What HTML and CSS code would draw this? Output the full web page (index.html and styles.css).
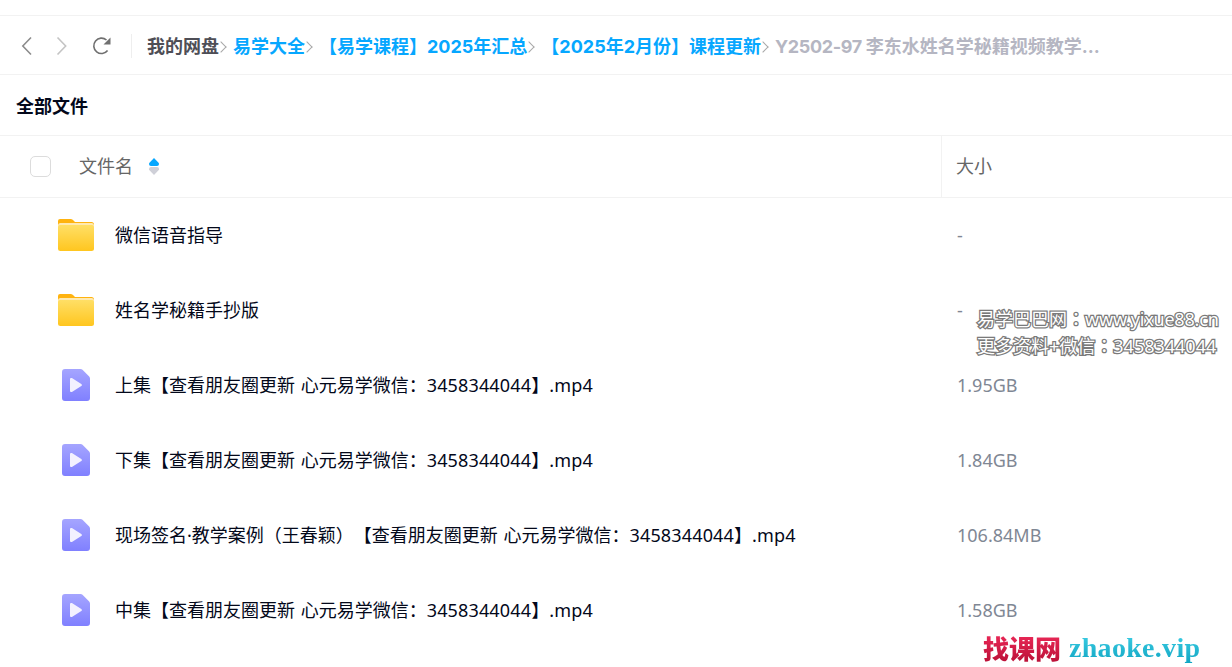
FILE: index.html
```html
<!DOCTYPE html>
<html lang="zh-CN">
<head>
<meta charset="utf-8">
<title>全部文件</title>
<link rel="stylesheet" href="styles.css">
</head>
<body>
<svg class="defs" width="0" height="0" aria-hidden="true">
  <defs>
    <linearGradient id="fg" x1="0" y1="0" x2="0" y2="1"><stop offset="0" stop-color="#ffdf66"/><stop offset="1" stop-color="#ffc61f"/></linearGradient>
    <linearGradient id="vg" x1="0" y1="0" x2="0" y2="1"><stop offset="0" stop-color="#a5a5ff"/><stop offset="1" stop-color="#8080ff"/></linearGradient>
    <symbol id="folder" viewBox="0 0 36 32">
      <path d="M2 0h10.500c1 0 1.800.4 2.500 1l2 2h16.500a2.500 2.500 0 0 1 2.500 2.500V12H0V2a2 2 0 0 1 2-2z" fill="#ffb30f"/>
      <path d="M0 6.500a2.500 2.500 0 0 1 2.500-2.500h31a2.500 2.500 0 0 1 2.500 2.500V12H0z" fill="#ffe9b0"/>
      <path d="M0 8a2 2 0 0 1 2-2h32a2 2 0 0 1 2 2v21.500a2.500 2.500 0 0 1-2.500 2.500h-31A2.500 2.500 0 0 1 0 29.500z" fill="url(#fg)"/>
    </symbol>
    <symbol id="video" viewBox="0 0 28 32">
      <path d="M3 0h15.500c.8 0 1.500.3 2 .8l6.700 6.700c.5.500.8 1.200.8 2V29a3 3 0 0 1-3 3H3a3 3 0 0 1-3-3V3a3 3 0 0 1 3-3z" fill="url(#vg)"/>
      <path d="M8 10.200c0-1 1-1.600 1.900-1.100l9.400 5.800c.8.500.8 1.700 0 2.200l-9.400 5.800c-.9.500-1.900-.1-1.900-1.100z" fill="#f3f1ff"/>
    </symbol>
  </defs>
</svg>
<div class="page">
  <nav class="nav">
    <div class="nav-btns">
      <svg class="ic" width="14" height="20" viewBox="0 0 14 20"><path d="M11 1.500 2.800 10l8.200 8.500" fill="none" stroke="#8c8c8c" stroke-width="1.600"/></svg>
      <svg class="ic" width="14" height="20" viewBox="0 0 14 20"><path d="m3.500 1.500 8.200 8.500-8.200 8.500" fill="none" stroke="#c4c4c4" stroke-width="1.600"/></svg>
      <svg class="ic" width="20" height="20" viewBox="0 0 20 20"><path d="M15.600 14.500A7.700 7.700 0 1 1 14.500 4" fill="none" stroke="#707070" stroke-width="1.600"/><path d="M18.500 1.500v7h-7z" fill="#707070"/></svg>
    </div>
    <div class="crumbs">
      <span class="crumb root">我的网盘</span><span class="sep"></span>
      <span class="crumb link">易学大全</span><span class="sep"></span>
      <span class="crumb link">【易学课程】2025年汇总</span><span class="sep"></span>
      <span class="crumb link">【2025年2月份】课程更新</span><span class="sep"></span>
      <span class="crumb last"><span class="code">Y2502-97 </span>李东水姓名学秘籍视频教学...</span>
    </div>
  </nav>
  <h1 class="title">全部文件</h1>
  <div class="thead">
    <div class="th-name">
      <span class="check"></span>
      <span class="th-label">文件名</span>
      <span class="sort"><i class="up"></i><i class="down"></i></span>
    </div>
    <div class="th-size">大小</div>
  </div>
  <ul class="rows">
    <li class="row"><svg class="folder"><use href="#folder"/></svg><span class="name">微信语音指导</span><span class="size">-</span></li>
    <li class="row"><svg class="folder"><use href="#folder"/></svg><span class="name">姓名学秘籍手抄版</span><span class="size">-</span></li>
    <li class="row"><svg class="video"><use href="#video"/></svg><span class="name">上集【查看朋友圈更新 心元易学微信：<span class="num">3458344044】.mp4</span></span><span class="size">1.95GB</span></li>
    <li class="row"><svg class="video"><use href="#video"/></svg><span class="name">下集【查看朋友圈更新 心元易学微信：<span class="num">3458344044】.mp4</span></span><span class="size">1.84GB</span></li>
    <li class="row"><svg class="video"><use href="#video"/></svg><span class="name">现场签名·教学案例（王春颖）【查看朋友圈更新 心元易学微信：<span class="num">3458344044】.mp4</span></span><span class="size">106.84MB</span></li>
    <li class="row"><svg class="video"><use href="#video"/></svg><span class="name">中集【查看朋友圈更新 心元易学微信：<span class="num">3458344044】.mp4</span></span><span class="size">1.58GB</span></li>
  </ul>
</div>
<div class="mark-site">易学巴巴网<span class="colon" lang="zh-TW">：</span><span class="url">www.yixue88.cn</span><br>更多资料+微信<span class="colon" lang="zh-TW">：</span>3458344044</div>
<div class="mark-logo"><span class="cn">找课网</span><span class="en">zhaoke.vip</span></div>
</body>
</html>
```
FILE: styles.css
```css
* { box-sizing: border-box; }
html, body { margin: 0; height: 100%; overflow: hidden; background: #fff; }
body { font-family: "Noto Sans", "Noto Sans CJK SC", sans-serif; color: #03081a; position: relative; text-spacing-trim: space-all; }
.defs { position: absolute; }
.page { padding-top: 15px; }
.nav { height: 60px; display: flex; align-items: center; border-top: 1px solid #f2f2f2; border-bottom: 1px solid #f2f2f2; padding-left: 20px; }
.nav-btns { display: flex; align-items: center; gap: 20px; height: 24px; width: 112px; margin-top: 2px; border-right: 1px solid #eeeeee; }
.nav-btns .ic:last-child { margin-left: 4px; }
.crumbs { display: flex; align-items: center; margin-left: 15px; padding-top: 4px; font-family: "Inter", "Noto Sans CJK SC", sans-serif; font-size: 18px; font-weight: 700; line-height: 24px; white-space: nowrap; }
.crumb.root { color: #4e4e56; }
.crumb.link { color: #06a7ff; }
.crumb.last { color: #b5b6c2; }
.code { letter-spacing: -.35px; }
.sep { width: 8px; height: 8px; border-top: 1px solid #a8a8a8; border-right: 1px solid #a8a8a8; transform: rotate(45deg); margin: 0 8px 0 -2px; flex: none; }
.title { margin: 0; height: 60px; padding: 1px 16px 0; font-size: 18px; font-weight: 700; line-height: 60px; color: #03081a; }
.thead { height: 63px; display: flex; border-top: 1px solid #f2f2f2; border-bottom: 1px solid #f2f2f2; color: #666; font-size: 18px; }
.th-name { width: 942px; display: flex; align-items: center; padding-left: 30px; border-right: 1px solid #f2f2f2; }
.check { width: 21px; height: 21px; border: 1px solid #dcdcdc; border-radius: 5px; }
.th-label { margin-left: 28px; padding-bottom: 4px; }
.sort { margin-left: 16px; display: flex; flex-direction: column; gap: 1px; width: 10px; }
.sort i { display: block; height: 8px; width: 10px; }
.sort .up { background: #06a7ff; clip-path: polygon(50% 0, 100% 65%, 100% 100%, 0 100%, 0 65%); border-radius: 2px; }
.sort .down { background: #cfd0d8; clip-path: polygon(0 0, 100% 0, 100% 35%, 50% 100%, 0 35%); border-radius: 2px; }
.th-size { padding-left: 14px; padding-bottom: 4px; display: flex; align-items: center; }
.rows { list-style: none; margin: -1px 0 0; padding: 0; }
.row { height: 75px; display: flex; align-items: center; font-size: 18px; }
.folder { width: 36px; height: 32px; margin-left: 58px; flex: none; }
.video { width: 28px; height: 32px; margin-left: 62px; margin-right: 4px; flex: none; }
.name { margin-left: 21px; width: 842px; padding-bottom: 2px; color: #03081a; white-space: nowrap; word-spacing: 1px; }
.num { letter-spacing: .15px; }
.size { color: #7f8794; }
.mark-site { position: absolute; left: 977px; top: 306px; font-size: 18px; line-height: 27px; white-space: nowrap; color: #fff; -webkit-text-stroke: 2.5px #7a7a7a; paint-order: stroke fill; }
.colon { font-family: "Noto Sans CJK TC", sans-serif; line-height: 0; }
.url { letter-spacing: -.2px; }
.mark-logo { position: absolute; left: 983px; top: 632px; display: flex; align-items: center; gap: 8px; white-space: nowrap; }
.mark-logo .cn { font-size: 26px; font-weight: 900; font-family: "Noto Sans CJK SC", sans-serif; line-height: 32px; background: linear-gradient(#ee2a5a, #b80f35); -webkit-background-clip: text; background-clip: text; color: transparent; }
.mark-logo .en { font-size: 28px; font-family: "Liberation Serif", serif; font-weight: 700; line-height: 32px; letter-spacing: .3px; background: linear-gradient(#3fd0e6, #0fa4c2); -webkit-background-clip: text; background-clip: text; color: transparent; }
```
